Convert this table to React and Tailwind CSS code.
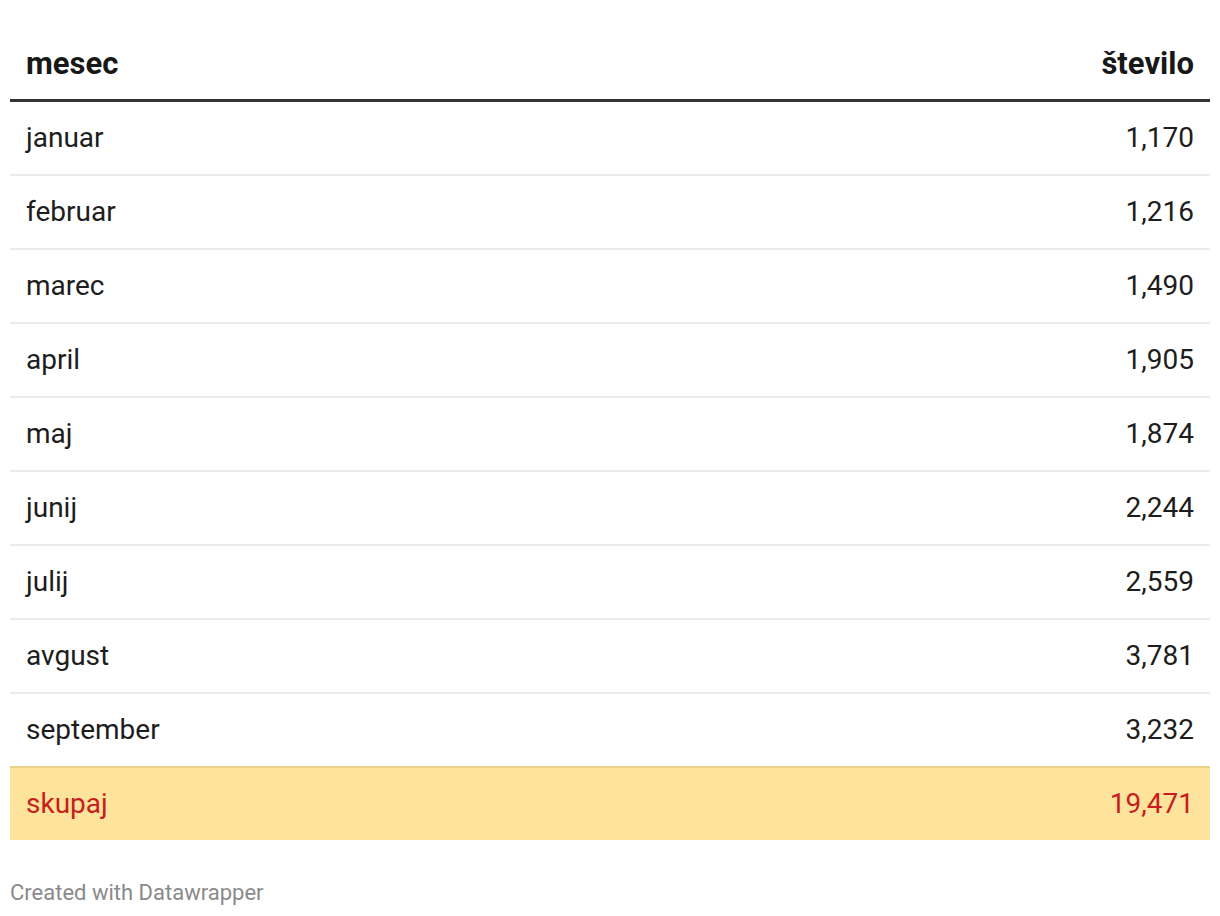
import React from "react";

const rows = [
  ["januar", "1,170"],
  ["februar", "1,216"],
  ["marec", "1,490"],
  ["april", "1,905"],
  ["maj", "1,874"],
  ["junij", "2,244"],
  ["julij", "2,559"],
  ["avgust", "3,781"],
  ["september", "3,232"],
];

export default function App() {
  return (
    <div
      className="bg-white px-[10px] pt-[10px] text-[#1d1d1d]"
      style={{ fontFamily: "Roboto, 'Liberation Sans', sans-serif" }}
    >
      {/* header */}
      <div className="flex justify-between px-4 pt-[37px] pb-[18px] text-[31px] leading-[34px] font-bold text-[#181818] border-b-[3px] border-[#333333]">
        <span>mesec</span>
        <span>število</span>
      </div>

      {/* body rows */}
      {rows.map(([m, n], i) => (
        <div
          key={m}
          className={`flex justify-between items-center px-4 h-[74px] text-[28px] ${
            i === rows.length - 1 ? "border-b-2 border-[#ead08a]" : "border-b-2 border-[#ebebeb]"
          }`}
        >
          <span>{m}</span>
          <span>{n}</span>
        </div>
      ))}

      {/* total row */}
      <div className="flex justify-between items-center px-4 h-[72px] text-[28px] bg-[#fee39d] text-[#c71e1d]">
        <span>skupaj</span>
        <span>19,471</span>
      </div>

      {/* footer */}
      <div className="mt-[40px] text-[22px] leading-[26px] text-[#8a8a8a]">Created with Datawrapper</div>
    </div>
  );
}
